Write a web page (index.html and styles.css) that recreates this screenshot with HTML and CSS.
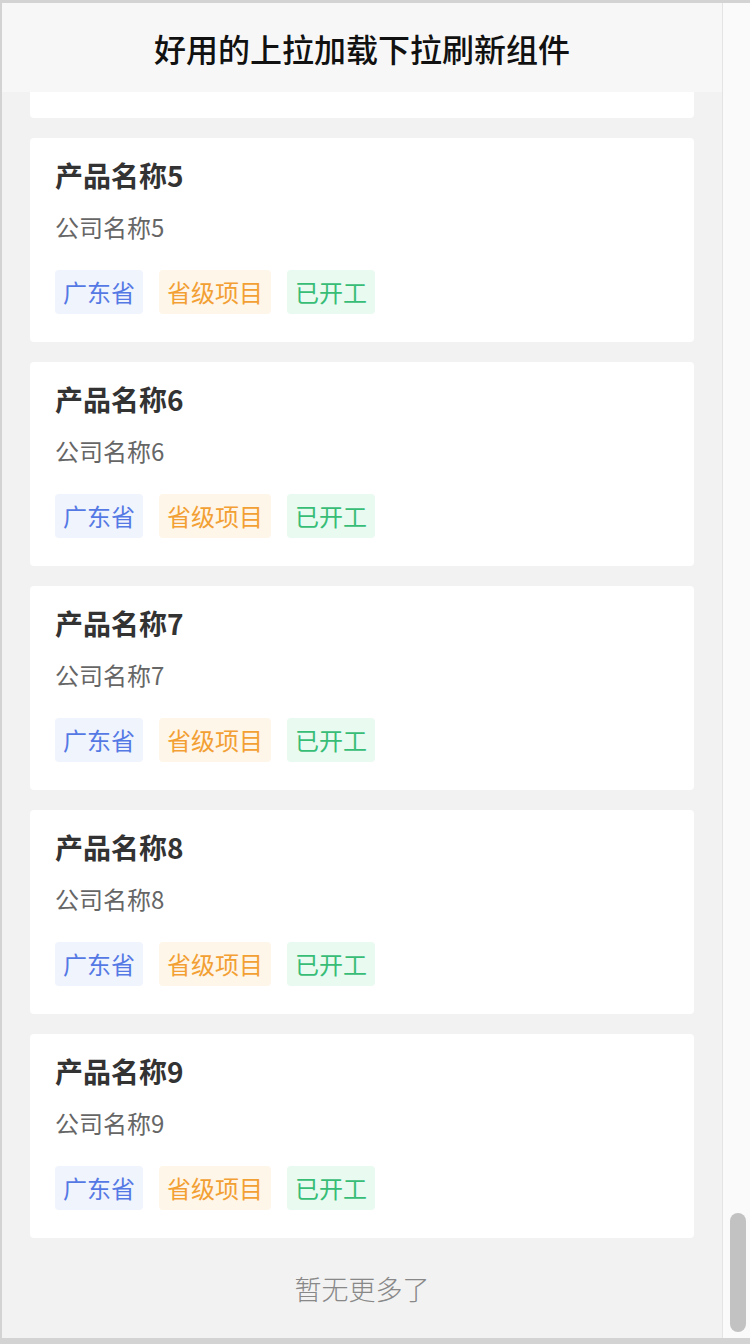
FILE: index.html
```html
<!DOCTYPE html>
<html lang="zh-CN">
<head>
  <meta charset="UTF-8">
  <meta name="viewport" content="width=device-width, initial-scale=1.0">
  <title>好用的上拉加载下拉刷新组件</title>
  <link rel="stylesheet" href="styles.css">
</head>
<body>
  <div class="window">
    <div class="app">
      <header>
        <h1>好用的上拉加载下拉刷新组件</h1>
      </header>
      <main class="list">
        <div class="card card-tail"></div>

        <div class="card">
          <div class="card-title">产品名称5</div>
          <div class="card-sub">公司名称5</div>
          <div class="tags">
            <span class="tag blue">广东省</span>
            <span class="tag orange">省级项目</span>
            <span class="tag green">已开工</span>
          </div>
        </div>

        <div class="card">
          <div class="card-title">产品名称6</div>
          <div class="card-sub">公司名称6</div>
          <div class="tags">
            <span class="tag blue">广东省</span>
            <span class="tag orange">省级项目</span>
            <span class="tag green">已开工</span>
          </div>
        </div>

        <div class="card">
          <div class="card-title">产品名称7</div>
          <div class="card-sub">公司名称7</div>
          <div class="tags">
            <span class="tag blue">广东省</span>
            <span class="tag orange">省级项目</span>
            <span class="tag green">已开工</span>
          </div>
        </div>

        <div class="card">
          <div class="card-title">产品名称8</div>
          <div class="card-sub">公司名称8</div>
          <div class="tags">
            <span class="tag blue">广东省</span>
            <span class="tag orange">省级项目</span>
            <span class="tag green">已开工</span>
          </div>
        </div>

        <div class="card">
          <div class="card-title">产品名称9</div>
          <div class="card-sub">公司名称9</div>
          <div class="tags">
            <span class="tag blue">广东省</span>
            <span class="tag orange">省级项目</span>
            <span class="tag green">已开工</span>
          </div>
        </div>

        <div class="no-more">暂无更多了</div>
      </main>
    </div>
    <div class="scrollbar">
      <div class="thumb"></div>
    </div>
  </div>
</body>
</html>
```

FILE: styles.css
```css
body {
  margin: 0;
  padding: 0;
  background: #d3d3d3;
  font-family: "Noto Sans CJK SC", "Noto Sans", sans-serif;
}
.window {
  display: flex;
  height: 1335px;
  margin: 3px 0 6px 2px;
  background: #f2f2f2;
}
.app {
  flex: 1;
  display: flex;
  flex-direction: column;
  overflow: hidden;
}
header {
  height: 89px;
  background: #f7f7f7;
  display: flex;
  align-items: center;
  justify-content: center;
}
header h1 {
  margin: 0;
  font-size: 32px;
  font-weight: 500;
  color: #111;
  line-height: 1;
}
.list {
  display: flex;
  flex-direction: column;
  gap: 20px;
  padding: 0 28px;
}
.card {
  background: #fff;
  border-radius: 4px;
  padding: 22px 25px 28px;
}
.card-tail {
  height: 26px;
  padding: 0;
  border-radius: 0 0 4px 4px;
}
.card-title {
  font-size: 28px;
  font-weight: 700;
  color: #333;
  line-height: 30px;
}
.card-sub {
  margin-top: 22px;
  font-size: 24px;
  color: #666;
  line-height: 30px;
}
.tags {
  display: flex;
  gap: 16px;
  margin-top: 28px;
}
.tag {
  display: inline-block;
  padding: 0 8px;
  height: 44px;
  line-height: 44px;
  font-size: 24px;
  font-weight: 400;
  border-radius: 4px;
}
.blue { color: #5579e4; background: #f0f4fd; }
.orange { color: #f2a033; background: #fff6ea; }
.green { color: #38bd76; background: #e9faf1; }
.no-more {
  height: 60px;
  padding-bottom: 20px;
  display: flex;
  align-items: center;
  justify-content: center;
  font-size: 27px;
  font-weight: 300;
  color: #888;
}
.scrollbar {
  width: 20px;
  border-left: 1px solid #e4e4e4;
  background: #fafafa;
  padding: 0 4px 6px 3px;
  display: flex;
  flex-direction: column;
  justify-content: flex-end;
}
.thumb {
  height: 119px;
  border-radius: 8px;
  background: #c2c2c2;
  margin-left: 4px;
  width: 16px;
}
```
